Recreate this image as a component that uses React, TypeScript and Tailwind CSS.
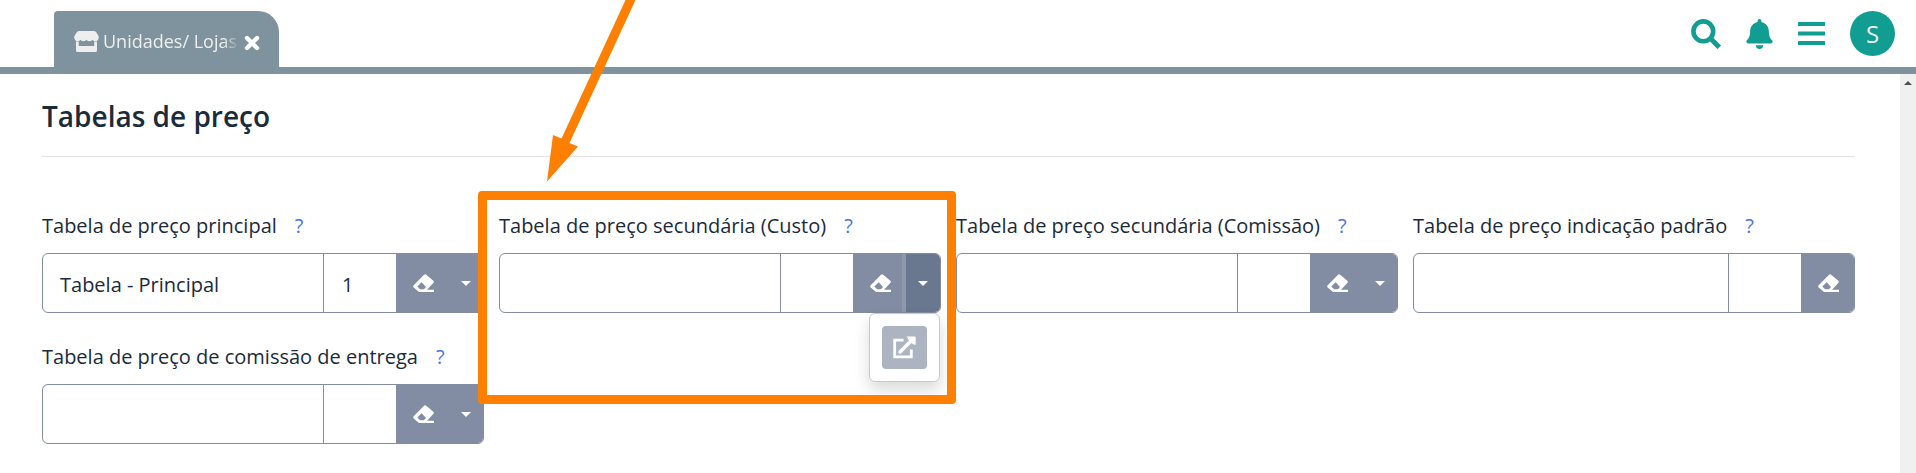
import { useId } from "react";
import { FaBell } from "react-icons/fa";

type FieldProps = {
  label: string;
  description?: string;
  code?: string;
  menu?: boolean;
  open?: boolean;
};

function EraserIcon() {
  return (
    <svg aria-hidden="true" width="21" height="18" viewBox="0 0 21 18" fill="currentColor" fillRule="evenodd">
      <path d="M.7 11.300 11 .7Q12.100-.3 13.200.7L20.300 6.800Q21.300 7.900 20.300 9L14 15.800H21V18H6L.7 13.500Q-.3 12.400.7 11.300ZM4.300 12.400 7.100 15.300H10.900L13 13.100 8.700 8.200Z" />
    </svg>
  );
}

function OpenIcon() {
  return (
    <svg aria-hidden="true" width="23" height="23" viewBox="0 0 23 23" fill="none" stroke="currentColor">
      <path d="M10.500 4.200H1.700V20.800H18.300V13.500" strokeWidth="2.800" />
      <path d="M7 16 18.500 4.500" strokeWidth="3.600" strokeLinecap="round" />
      <path d="M14.300.8H21.800Q22.400.8 22.400 1.400V8.500L19.800 7.800 15.300 3.300Z" fill="currentColor" strokeWidth=".6" strokeLinejoin="round" />
    </svg>
  );
}

function ShopIcon() {
  return (
    <svg aria-hidden="true" width="25" height="21" viewBox="0 0 25 21" fill="currentColor" className="shrink-0">
      <path d="M5 0H20Q21.200 0 22 1L24.300 4.500Q25 5.700 24.700 7.500 24 10 21.700 10.300 19.600 10.300 18.500 8.800 17.300 10.300 15.500 10.300 13.600 10.300 12.500 8.800 11.300 10.300 9.500 10.300 7.600 10.300 6.500 8.800 5.300 10.300 3.300 10.300 1 10 .3 7.500 0 5.700.7 4.500L3 1Q3.800 0 5 0Z" />
      <path d="M2 10.500H4.800V15H20.200V10.500H23V19.500Q23 21 21.500 21H3.500Q2 21 2 19.500Z" />
    </svg>
  );
}

function SearchIcon() {
  return (
    <svg aria-hidden="true" width="30" height="30" viewBox="0 0 30 30" fill="none" stroke="currentColor">
      <circle cx="12.300" cy="12.300" r="9.900" strokeWidth="4.600" />
      <path d="M20.500 20.500 28.300 28.300" strokeWidth="5" />
    </svg>
  );
}

function BarsIcon() {
  return (
    <svg aria-hidden="true" width="27" height="23" viewBox="0 0 27 23" fill="currentColor">
      <rect width="27" height="4" rx=".5" />
      <rect y="9.500" width="27" height="4" rx=".5" />
      <rect y="19" width="27" height="4" rx=".5" />
    </svg>
  );
}

function PriceTableField({ label, description = "", code = "", menu = true, open = false }: FieldProps) {
  const id = useId();
  return (
    <div className="relative min-w-0">
      <div className="flex h-[30px] items-center gap-[18px] whitespace-nowrap text-[20px]">
        <label htmlFor={id}>{label}</label>
        <a href="#ajuda" aria-label={"Ajuda: " + label} className="text-[#4a74e0]">?</a>
      </div>
      <div className="mt-3 flex h-[60px] overflow-hidden rounded-md border border-[#828da4] bg-white">
        <input id={id} defaultValue={description} className="w-0 min-w-0 grow px-[17px] pt-[3px] text-[20px] outline-none" />
        <input
          aria-label={"Código: " + label}
          defaultValue={code}
          className="w-[73px] border-l border-[#828da4] px-[18px] pt-[3px] text-[20px] outline-none"
        />
        <button type="button" aria-label="Limpar" className="flex w-[53px] items-center justify-center bg-[#828da4] pl-[2px] text-white">
          <EraserIcon />
        </button>
        {menu && (
          <button
            type="button"
            aria-label="Mais opções"
            aria-expanded={open}
            className={
              open
                ? "-ml-1 flex w-[38px] items-center justify-center border-l-4 border-[#8e99ae] bg-[#69778f]"
                : "-ml-1 flex w-[38px] items-center justify-center bg-[#828da4] pl-1"
            }
          >
            <span className="border-x-[5px] border-t-[5px] border-x-transparent border-t-white" />
          </button>
        )}
      </div>
      {open && (
        <div className="absolute right-px top-full rounded-md border border-[#c8cacd] bg-white p-3 shadow-[0_8px_16px_rgba(0,0,0,0.15)]">
          <button type="button" aria-label="Abrir cadastro" className="flex h-[43px] w-[45px] items-center justify-center rounded bg-[#acb4c2] text-white">
            <OpenIcon />
          </button>
        </div>
      )}
    </div>
  );
}

export default function App() {
  return (
    <div className="relative overflow-hidden bg-white font-['Open_Sans',sans-serif] text-[#1b2b3a]">
      <header className="flex h-[74px] items-start justify-between border-b-[7px] border-[#7e939d] pl-[54px] pr-[21px] pt-[11px]">
        <div className="flex h-14 w-[225px] items-center rounded-tl rounded-tr-[21px] bg-[#7e939d] pl-5 pr-[19px] pt-1 text-[#eeeeee]">
          <ShopIcon />
          <span className="ml-1 w-0 grow overflow-hidden whitespace-nowrap text-[18px] [mask-image:linear-gradient(to_right,black_88%,transparent)]">
            Unidades/ Lojas
          </span>
          <button type="button" aria-label="Fechar aba" className="ml-1 mt-1 text-white">
            <svg aria-hidden="true" width="16" height="16" viewBox="0 0 16 16" fill="none" stroke="currentColor" strokeWidth="4.400" strokeLinecap="round">
              <path d="M3 3 13 13M13 3 3 13" />
            </svg>
          </button>
        </div>
        <div className="flex h-[45px] items-center gap-[25px] text-[#129d92]">
          <button type="button" aria-label="Pesquisar"><SearchIcon /></button>
          <button type="button" aria-label="Notificações"><FaBell className="h-[30px] w-[27px]" /></button>
          <button type="button" aria-label="Menu"><BarsIcon /></button>
          <button type="button" aria-label="Perfil" className="flex size-[45px] items-center justify-center rounded-full bg-[#129d92] text-[24px] text-[#eeeeee]">
            S
          </button>
        </div>
      </header>
      <div className="flex">
        <main className="min-w-0 grow px-[42px] pb-[29px] pr-[45px] pt-6">
          <h1 className="text-[28px] font-semibold leading-9">Tabelas de preço</h1>
          <hr className="mt-[22px] border-[#e2e4e6]" />
          <div className="mt-[54px] grid grid-cols-4 gap-x-[15px] gap-y-[29px]">
            <PriceTableField label="Tabela de preço principal" description="Tabela - Principal" code="1" />
            <PriceTableField label="Tabela de preço secundária (Custo)" open />
            <PriceTableField label="Tabela de preço secundária (Comissão)" />
            <PriceTableField label="Tabela de preço indicação padrão" menu={false} />
            <PriceTableField label="Tabela de preço de comissão de entrega" />
          </div>
        </main>
        <div aria-hidden="true" className="flex w-4 shrink-0 justify-center bg-[#f0f0f0] pt-[7px]">
          <span className="h-1 border-x-4 border-b-4 border-x-transparent border-b-[#505050]" />
        </div>
      </div>
      <div className="pointer-events-none absolute left-[478px] top-[191px] h-[213px] w-[478px] rounded-[4px] border-[9px] border-[#ff8000]" />
      <svg aria-hidden="true" className="pointer-events-none absolute left-[540px] top-0" width="100" height="185" viewBox="0 0 100 185" fill="#ff8000">
        <path d="M85.500 0 95.500 0 29.500 143 38 146.500 7 181.500 13 135 21.500 138.500Z" />
      </svg>
    </div>
  );
}
